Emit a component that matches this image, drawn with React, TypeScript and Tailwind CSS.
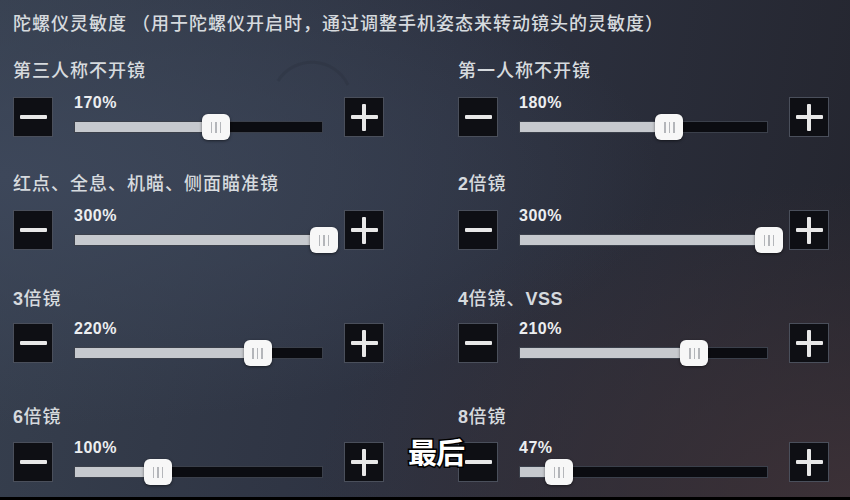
import React from 'react'

interface SliderItem {
  label: string
  value: number
}

// 陀螺仪灵敏度，每行两项
const rows: { items: [SliderItem, SliderItem]; gap: string; inner: string }[] = [
  { items: [{ label: '第三人称不开镜', value: 170 }, { label: '第一人称不开镜', value: 180 }], gap: 'mt-[24px]', inner: 'mt-[17px]' },
  { items: [{ label: '红点、全息、机瞄、侧面瞄准镜', value: 300 }, { label: '2倍镜', value: 300 }], gap: 'mt-[34px]', inner: 'mt-[17px]' },
  { items: [{ label: '3倍镜', value: 220 }, { label: '4倍镜、VSS', value: 210 }], gap: 'mt-[36px]', inner: 'mt-[15px]' },
  { items: [{ label: '6倍镜', value: 100 }, { label: '8倍镜', value: 47 }], gap: 'mt-[41px]', inner: 'mt-[16px]' },
]

const MAX = 300
const TRACK_W = 249

function Label({ text }: { text: string }) {
  // 数字和字母用粗体
  const parts = text.split(/([A-Za-z0-9]+)/).filter(Boolean)
  return (
    <div className="h-[22px] leading-[22px] text-[18px] font-medium tracking-[1px] text-[#d6dade] whitespace-nowrap [font-family:'Noto_Sans_CJK_SC',sans-serif]">
      {parts.map((p, i) =>
        /^[A-Za-z0-9]+$/.test(p) ? (
          <span key={i} className="font-bold [font-family:'Liberation_Sans',sans-serif] tracking-[0.5px]">
            {p}
          </span>
        ) : (
          <span key={i}>{p}</span>
        )
      )}
    </div>
  )
}

function StepButton({ kind }: { kind: 'minus' | 'plus' }) {
  return (
    <div className="relative w-[40px] h-[40px] shrink-0 bg-[#0e0f14] border-[1.5px] border-[#4a4f5b] flex items-center justify-center">
      <div className="w-[27px] h-[4px] bg-[#e8e8e8] rounded-[1px]" />
      {kind === 'plus' && <div className="absolute w-[4px] h-[27px] bg-[#e8e8e8] rounded-[1px]" />}
    </div>
  )
}

function Slider({ value }: { value: number }) {
  const pos = (value / MAX) * TRACK_W
  return (
    <div className="w-[249px] h-[40px] flex flex-col">
      <div className="-mt-[2px] h-[16px] leading-[16px] text-[16px] font-bold tracking-[0.5px] text-[#eceef0] [font-family:'Liberation_Sans',sans-serif]">
        {value}%
      </div>
      <div className="relative mt-[10px] h-[12px] w-full bg-[#0b0c11] border border-[#3b404b]">
        <div className="h-full bg-[#c6c9ce]" style={{ width: pos }} />
        <div
          className="absolute top-1/2 -translate-y-1/2 w-[28px] h-[26px] rounded-[6px] bg-[#f7f7f7] shadow-[0_1px_3px_rgba(0,0,0,0.5)] flex items-center justify-center gap-[3px]"
          style={{ left: pos - 14 }}
        >
          <span className="w-[1.5px] h-[11px] bg-[#b4b6ba]" />
          <span className="w-[1.5px] h-[11px] bg-[#b4b6ba]" />
          <span className="w-[1.5px] h-[11px] bg-[#b4b6ba]" />
        </div>
      </div>
    </div>
  )
}

function SliderCell({ item, inner }: { item: SliderItem; inner: string }) {
  return (
    <div className="w-[371px]">
      <Label text={item.label} />
      <div className={`${inner} flex items-start justify-between`}>
        <StepButton kind="minus" />
        <Slider value={item.value} />
        <StepButton kind="plus" />
      </div>
    </div>
  )
}

export default function App() {
  return (
    <div className="relative w-[850px] h-[500px] overflow-hidden flex flex-col bg-[radial-gradient(ellipse_at_0%_35%,#3d475a_0%,transparent_55%),radial-gradient(ellipse_at_100%_100%,#3c3137_0%,transparent_45%),linear-gradient(100deg,#37404f_0%,#2d3241_50%,#24252e_100%)]">
      {/* 背景里的淡弧线 */}
      <svg className="absolute left-[270px] top-[55px] opacity-25" width="90" height="40" viewBox="0 0 90 40">
        <path d="M8 26 A40 40 0 0 1 78 30" fill="none" stroke="#262c38" strokeWidth="3" />
      </svg>

      <div className="flex-1 pl-[13px] pt-[10px]">
        <div className="h-[24px] leading-[24px] text-[18px] font-medium tracking-[1px] text-[#d6dade] whitespace-nowrap [font-family:'Noto_Sans_CJK_SC',sans-serif]">
          陀螺仪灵敏度 （用于陀螺仪开启时，通过调整手机姿态来转动镜头的灵敏度）
        </div>

        {rows.map((row, i) => (
          <div key={i} className={`${row.gap} flex gap-x-[74px]`}>
            <SliderCell item={row.items[0]} inner={row.inner} />
            <SliderCell item={row.items[1]} inner={row.inner} />
          </div>
        ))}
      </div>

      <div className="h-[3px] bg-black shrink-0" />

      {/* 字幕 */}
      <div className="absolute left-[408px] top-[433px] text-[29px] leading-[36px] font-bold tracking-[-1px] text-white [font-family:'Noto_Sans_CJK_SC',sans-serif] [-webkit-text-stroke:3px_#000] [paint-order:stroke_fill]">
        最后
      </div>
    </div>
  )
}
